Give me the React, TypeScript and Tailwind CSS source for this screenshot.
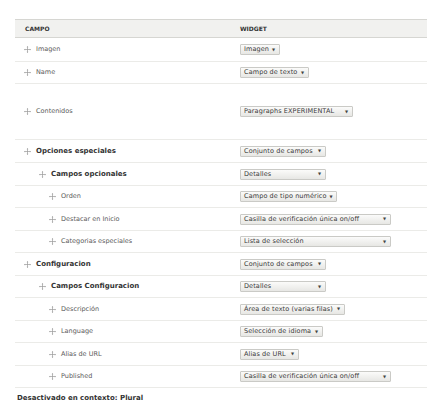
import React from 'react';

type Row = {
  label: string;
  level: number;
  bold?: boolean;
  widget: string;
  w: number;
  h: number;
};

const rows: Row[] = [
  { label: 'Imagen', level: 0, widget: 'Imagen', w: 40, h: 24 },
  { label: 'Name', level: 0, widget: 'Campo de texto', w: 69, h: 22 },
  { label: 'Contenidos', level: 0, widget: 'Paragraphs EXPERIMENTAL', w: 113, h: 56 },
  { label: 'Opciones especiales', level: 0, bold: true, widget: 'Conjunto de campos', w: 86, h: 23 },
  { label: 'Campos opcionales', level: 1, bold: true, widget: 'Detalles', w: 86, h: 23 },
  { label: 'Orden', level: 2, widget: 'Campo de tipo numérico', w: 97, h: 22 },
  { label: 'Destacar en Inicio', level: 2, widget: 'Casilla de verificación única on/off', w: 151, h: 23 },
  { label: 'Categorias especiales', level: 2, widget: 'Lista de selección', w: 151, h: 22 },
  { label: 'Configuracion', level: 0, bold: true, widget: 'Conjunto de campos', w: 86, h: 23 },
  { label: 'Campos Configuracion', level: 1, bold: true, widget: 'Detalles', w: 86, h: 22 },
  { label: 'Descripción', level: 2, widget: 'Área de texto (varias filas)', w: 105, h: 23 },
  { label: 'Language', level: 2, widget: 'Selección de idioma', w: 83, h: 22 },
  { label: 'Alias de URL', level: 2, widget: 'Alias de URL', w: 59, h: 23 },
  { label: 'Published', level: 2, widget: 'Casilla de verificación única on/off', w: 151, h: 22 },
];

const indent = ['pl-[9px]', 'pl-[24px]', 'pl-[34px]'];

function DragHandle() {
  return (
    <svg width="7" height="7" viewBox="0 0 8 8" className="shrink-0">
      <path d="M4 1V7M1 4H7" stroke="#9a9a9a" strokeWidth="0.8" />
      <path d="M4 0L3 1.3H5Z M4 8L3 6.7H5Z M0 4L1.3 3V5Z M8 4L6.7 3V5Z" fill="#9a9a9a" />
    </svg>
  );
}

function Select({ text, w }: { text: string; w: number }) {
  return (
    <div
      style={{ width: w }}
      className="h-[11px] flex items-center justify-between gap-[3px] border border-[#cacac6] rounded-[1px] bg-gradient-to-b from-[#fbfbfa] to-[#e7e7e4] pl-[3px] pr-[4px] text-[6.5px] leading-none text-[#3a3a3a]"
    >
      <span className="whitespace-nowrap tracking-[0.1px]">{text}</span>
      <span className="text-[4px] text-[#444]">▼</span>
    </div>
  );
}

export default function App() {
  return (
    <div className="w-[434px] h-[414px] bg-white pl-[15px] pr-[7px] pt-[19px] font-['DejaVu_Sans',sans-serif]">
      <div className="flex h-[19px] items-center bg-[#f1f1ef] border-y border-[#d6d6d2] text-[6px] font-bold text-[#333]">
        <div className="w-[217px] pl-[10px]">CAMPO</div>
        <div className="pl-[8px]">WIDGET</div>
      </div>
      {rows.map((r, i) => (
        <div
          key={i}
          style={{ height: r.h }}
          className="flex items-center border-b border-[#ebebe8]"
        >
          <div className={`w-[217px] flex items-center gap-[5px] ${indent[r.level]}`}>
            <DragHandle />
            <span className={`leading-none ${r.bold ? 'text-[7px] font-bold text-[#333]' : 'text-[6.5px] text-[#5a5a5a]'}`}>
              {r.label}
            </span>
          </div>
          <div className="pl-[8px]">
            <Select text={r.widget} w={r.w} />
          </div>
        </div>
      ))}
      <div className="pl-[2px] pt-[7px] text-[7px] leading-none font-bold text-[#333]">
        Desactivado en contexto: Plural
      </div>
    </div>
  );
}
